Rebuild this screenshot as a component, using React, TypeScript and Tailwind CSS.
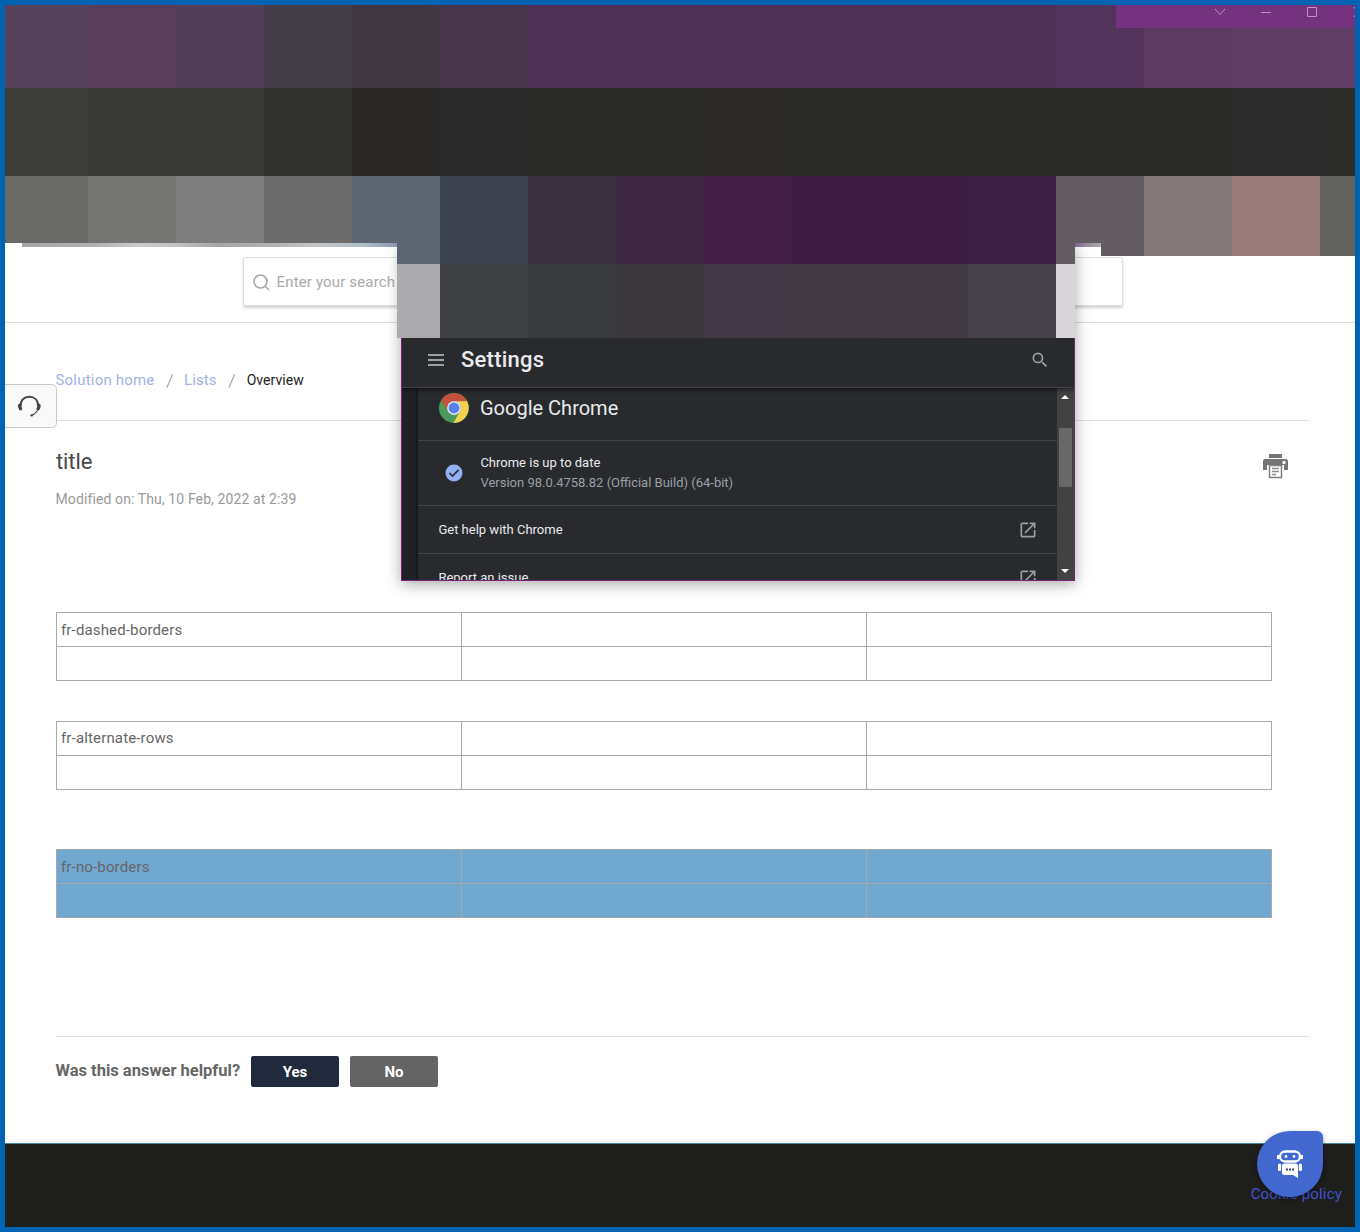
import React from "react";

const ROW_ONE = ["#54415a", "#593e5b", "#523d58", "#443e48", "#3f3742", "#49374d", "#513257", "#503157", "#503156", "#4f3156", "#4f3056", "#4f3056", "#53345c", "#5c3a61", "#5e3c63", "#603e66"];
const ROW_TWO = ["#3d3d3a", "#393a37", "#383837", "#31312f", "#2a2826", "#292929", "#292a27", "#292a27", "#2a2927", "#292a27", "#292a27", "#292a27", "#2a2a28", "#292a27", "#2b2b2b", "#2c2c2b"];
const ROW_THREE = ["#696967", "#757573", "#7e7e7e", "#6c6c6c", "#5c6672", "#3e4350", "#39323e", "#402845", "#421e45", "#3e1b42", "#3d1c42", "#3d1f43", "#635c62", "#847878", "#987b7a", "#62625f"];
const ROW_FOUR = ["#3f4042", "#3a3b3d", "#3a373d", "#403844", "#403843", "#413944", "#47414b"];

function MosaicRow({ colors, height }: { colors: string[]; height: string }) {
  return (
    <div className={`flex ${height}`}>
      {colors.map((color, i) => (
        <div key={i} className="w-[88px] shrink-0 first:w-[83px] last:w-[35px]" style={{ backgroundColor: color }} />
      ))}
    </div>
  );
}

function DataTable({ label, filled = false, leading = "leading-[35px]" }: { label: string; filled?: boolean; leading?: string }) {
  const line = filled ? "border-[#a8a8a8]" : "border-[#a9a9a9]";
  return (
    <div className={`grid h-[69px] w-[1216px] grid-cols-[405px_405px_405px] grid-rows-[34px_34px] border-l border-t text-[15px] text-[#666] ${line} ${filled ? "bg-[#70a8d0]" : ""}`}>
      {[0, 1, 2, 3, 4, 5].map((i) => (
        <div key={i} className={`border-b border-r pl-1 tracking-[0.15px] ${leading} ${line}`}>
          {i === 0 ? label : null}
        </div>
      ))}
    </div>
  );
}

function OpenIcon() {
  return (
    <svg width="20" height="20" viewBox="0 0 24 24" fill="#9aa0a6">
      <path d="M19 19H5V5h7V3H5a2 2 0 0 0-2 2v14a2 2 0 0 0 2 2h14c1.100 0 2-.9 2-2v-7h-2v7zM14 3v2h3.590l-9.830 9.830 1.410 1.410L19 6.410V10h2V3h-7z" />
    </svg>
  );
}

function ChromeLogo() {
  return (
    <svg width="30" height="30" viewBox="0 0 48 48">
      <circle cx="24" cy="24" r="24" fill="#4a9a5b" />
      <path d="M3.200 12A24 24 0 0 1 44.800 13H24a11 11 0 0 0-10.400 14.500Z" fill="#c5503b" />
      <path d="M44.800 13A24 24 0 0 1 23 48l10.500-18.500A11 11 0 0 0 24 13Z" fill="#f7d04e" />
      <circle cx="24" cy="24" r="11" fill="#e9edf5" />
      <circle cx="24" cy="24" r="8.700" fill="#5580ee" />
    </svg>
  );
}

function SettingsWindow() {
  return (
    <div className="absolute left-[392px] top-[238px] w-[678px]">
      <div className="flex h-[21px]">
        <div className="w-[43px] bg-[#5c6672]" />
        <div className="w-[88px] bg-[#3e4350]" />
        <div className="w-[88px] bg-[#39323e]" />
        <div className="w-[88px] bg-[#402845]" />
        <div className="w-[88px] bg-[#421e45]" />
        <div className="w-[88px] bg-[#3e1b42]" />
        <div className="w-[88px] bg-[#3d1c42]" />
        <div className="w-[88px] bg-[#3d1f43]" />
        <div className="w-[19px] bg-[#635c62]" />
      </div>
      <div className="flex h-[74px]">
        <div className="w-[43px] bg-[#acacae]" />
        {ROW_FOUR.map((c, i) => (
          <div key={i} className="w-[88px]" style={{ backgroundColor: c }} />
        ))}
        <div className="w-[19px] bg-[#d8d6d9]" />
      </div>
      <div className="ml-1 h-[243px] overflow-hidden border-x border-b border-[#7a237d] bg-[#202124] text-[#e8eaed]">
        <div className="relative flex h-[50px] items-center border-b border-[#414347] bg-[#292a2d] pb-[6px] pl-[26px] pr-[26px] shadow-[0_2px_4px_rgba(0,0,0,0.5)]">
          <svg width="16" height="12" viewBox="0 0 16 12" className="mt-px" fill="#9aa0a6">
            <path d="M0 0h16v2H0zM0 5h16v2H0zM0 10h16v2H0z" />
          </svg>
          <span className="ml-[17px] text-[22px] font-medium leading-none tracking-[0.25px]">Settings</span>
          <svg width="20" height="20" viewBox="0 0 24 24" className="ml-auto -mr-[2px]" fill="#9aa0a6">
            <path d="M15.500 14h-.79l-.28-.27A6.470 6.470 0 0 0 16 9.500 6.500 6.500 0 1 0 9.500 16c1.610 0 3.090-.59 4.230-1.570l.27.28v.79l5 4.990L20.490 19l-4.990-5zm-6 0a4.500 4.500 0 1 1 0-9 4.500 4.500 0 0 1 0 9z" />
          </svg>
        </div>
        <div className="flex h-[192px]">
          <div className="ml-4 w-[639px] overflow-hidden bg-[#292a2d] shadow-[-1px_0_2px_rgba(0,0,0,0.4)]">
            <div className="flex h-[53px] items-center border-b border-[#414347] pb-[12px] pl-[21px]">
              <ChromeLogo />
              <span className="ml-[11px] text-[20px] leading-none">Google Chrome</span>
            </div>
            <div className="flex h-[65px] items-center border-b border-[#414347] pl-[27px]">
              <svg width="18" height="18" viewBox="0 0 18 18">
                <circle cx="9" cy="9" r="8.500" fill="#93aff5" />
                <path d="m4.500 9 3 3L13.600 5.900" fill="none" stroke="#292a2d" strokeWidth="1.600" />
              </svg>
              <div className="ml-[17.400px] text-[13px] leading-5">
                <div>Chrome is up to date</div>
                <div className="text-[#9aa0a6]">Version 98.0.4758.82 (Official Build) (64-bit)</div>
              </div>
            </div>
            {["Get help with Chrome", "Report an issue"].map((text) => (
              <div key={text} className="flex h-12 items-center justify-between border-b border-[#414347] pl-[20.400px] pr-[19px] text-[13px]">
                <span>{text}</span>
                <OpenIcon />
              </div>
            ))}
          </div>
          <div className="flex w-[17px] flex-col items-center bg-[#424242]">
            <svg width="8" height="4" viewBox="0 0 8 4" className="mt-[7px] -ml-px shrink-0" fill="#fff"><path d="m0 4 4-4 4 4Z" /></svg>
            <div className="mt-[29px] h-[59px] w-[13px] shrink-0 bg-[#686868]" />
            <svg width="8" height="4" viewBox="0 0 8 4" className="mt-[82px] -ml-px shrink-0" fill="#fff"><path d="m0 0 4 4 4-4Z" /></svg>
          </div>
        </div>
      </div>
    </div>
  );
}

export default function App() {
  return (
    <div className="relative h-[1232px] w-[1360px] overflow-hidden border-[5px] border-[#0063b1] bg-white font-['Roboto',sans-serif]">
      <MosaicRow colors={ROW_ONE} height="h-[83px]" />
      <MosaicRow colors={ROW_TWO} height="h-[88px]" />
      <MosaicRow colors={ROW_THREE} height="h-[80px]" />

      <div className="absolute left-[1111px] top-0 h-[23px] w-[239px] bg-[#74327f]">
        <svg width="239" height="23" viewBox="0 0 239 23" fill="none" stroke="#c08fc8" strokeWidth="1">
          <path d="m99 4 5 5.500 5-5.500M145 7.500h10M191.500 2.500h9v9h-9zM237.500 2l5 5-5 5" />
        </svg>
      </div>

      <div className="absolute left-0 top-[238px] h-[13px] w-[392px] bg-white pl-[17px]">
        <div className="h-1 bg-[linear-gradient(90deg,#a5a5a5,#b2b2b2_20%,#cccccc_31%,#c4c4c4_40%,#a5a5a5_52%,#b0b0b0_65%,#c5c5c5_78%,#aebfca_91%,#8f93b4)]" />
      </div>
      <div className="absolute left-[1070px] top-[238px] h-[13px] w-[26px] bg-white">
        <div className="h-1 bg-[linear-gradient(90deg,#805e92,#938c96_40%,#a9a9a9)]" />
      </div>

      <header className="h-[67px] border-b border-[#dadbdc] px-[238px] pt-px">
        <div className="flex h-[49px] w-[880px] items-center rounded-[2px] border border-[#dedede] bg-white pl-[9px] text-[15px] text-[#aaa] shadow-[0_2px_3px_rgba(0,0,0,0.18)]">
          <svg width="17" height="17" viewBox="0 0 17 17" fill="none" stroke="#a5a5ab" strokeWidth="1.500" className="mt-px">
            <circle cx="7.500" cy="7.500" r="6.500" />
            <path d="m12 12 4 4" />
          </svg>
          <span className="ml-[6.500px] mt-[2px] tracking-[0.16px]">Enter your search term here...</span>
        </div>
      </header>

      <main className="pl-[51px]">
        <nav className="flex h-[98px] w-[1253px] items-center border-b border-[#dfdfdf] pt-[17px] text-[15px] text-[#a2b3e2]">
          <span className="-ml-[0.500px] tracking-[0.2px]">Solution home</span>
          <svg width="8" height="14" viewBox="0 0 8 14" className="ml-[11px] mt-px" stroke="#aaa" strokeWidth="1.300"><path d="M6.500 .5 1 13.500" /></svg>
          <span className="ml-[10.500px] tracking-[0.1px]">Lists</span>
          <svg width="8" height="14" viewBox="0 0 8 14" className="ml-[11px] mt-px" stroke="#aaa" strokeWidth="1.300"><path d="M6.500 .5 1 13.500" /></svg>
          <span className="ml-[11px] text-[14px] tracking-[0.04px] text-[#222]">Overview</span>
        </nav>
        <div className="flex h-[191px] w-[1253px] justify-between pr-[21px]">
          <div>
            <h1 className="mt-[27px] text-[22px] leading-[28px] tracking-[-0.1px] text-[#484848]">title</h1>
            <p className="-ml-[0.500px] mt-[13px] text-[14px] leading-5 tracking-[0.11px] text-[#999]">Modified on: Thu, 10 Feb, 2022 at 2:39</p>
          </div>
          <svg width="25" height="25" viewBox="0 0 25 25" className="mt-[33px]" fill="#747474">
            <path d="M6 0h13v4H6zM2 5h21a2 2 0 0 1 2 2v9h-4v-5H4v5H0V7a2 2 0 0 1 2-2Z" />
            <path d="M6.500 11.500h12v12h-12z" fill="#fff" stroke="#808080" strokeWidth="1.500" />
            <path d="M9 14.500h7M9 17.500h7M9 20.500h4" stroke="#8a8a8a" strokeWidth="1.500" />
            <circle cx="21" cy="8.500" r="1.700" fill="#fff" />
          </svg>
        </div>
        <DataTable label="fr-dashed-borders" />
        <div className="mt-[40px]"><DataTable label="fr-alternate-rows" leading="leading-[33px]" /></div>
        <div className="mt-[59px]"><DataTable label="fr-no-borders" filled /></div>
        <div className="mt-[118px] flex h-[107px] w-[1253px] items-start border-t border-[#dfdfdf] pt-[19px]">
          <span className="-ml-[0.500px] w-[195.500px] whitespace-nowrap text-[16.500px] font-bold leading-[29px] text-[#666]">Was this answer helpful?</span>
          <button className="h-[31px] w-[88px] rounded-[2px] bg-[#212a3c] pt-[2px] text-[15px] font-bold text-white">Yes</button>
          <button className="ml-[11px] h-[31px] w-[88px] rounded-[2px] bg-[#646464] pt-[2px] text-[15px] font-bold text-white">No</button>
        </div>
      </main>
      <footer className="flex h-[84px] justify-end border-t border-[#4c879a] bg-[#1e1e1c] pr-[13px] pt-[40px] text-[15px] leading-5 text-[#4053cf]">
        <span className="tracking-[0.18px]">Cookie policy</span>
      </footer>

      <div className="absolute -left-px top-[379px] flex h-[44px] w-[53px] items-center rounded-r-[5px] border border-[#c9c9c9] bg-[#f9f9f9] pl-[12px]">
        <svg width="25" height="22" viewBox="0 0 25 22" fill="none" stroke="#444" strokeLinecap="round">
          <path d="M3.500 11C3.500 5 7.300 1.800 12.300 1.800S21.100 5 21.100 11" strokeWidth="2" />
          <path d="M2.700 10.500q-.4 1.700.8 3.300" strokeWidth="3.400" />
          <path d="M21.900 10.500q.4 1.700-.8 3.300" strokeWidth="3.400" />
          <path d="M20.500 15.500Q18.500 18.500 15 20.300" strokeWidth="1.100" />
          <path d="M14.400 20.400h.5" strokeWidth="2.200" />
        </svg>
      </div>

      <div className="absolute left-[1252px] top-[1126px] flex h-[66px] w-[66px] items-center justify-center rounded-[33px_6px_33px_33px] bg-[#4268d0] shadow-[0_2px_5px_rgba(0,0,0,0.4)]">
        <svg width="26" height="28" viewBox="0 0 26 28" fill="#fff">
          <rect x="3" y="1.500" width="20" height="10" rx="5" fill="none" stroke="#fff" strokeWidth="2.300" />
          <path d="M0 5h2v4H0zM24 5h2v4h-2z" />
          <circle cx="9" cy="6.500" r="1.400" />
          <circle cx="17" cy="6.500" r="1.400" />
          <rect x="1" y="13.500" width="3.200" height="7.500" rx="1.500" />
          <rect x="21.800" y="13.500" width="3.200" height="7.500" rx="1.500" />
          <path d="M7.500 13.500h11a2.500 2.500 0 0 1 2.500 2.500v12l-5-3H7.500A2.500 2.500 0 0 1 5 22.500V16a2.500 2.500 0 0 1 2.500-2.500Z" />
          <path d="M9 18.500h2v2H9zM12 18.500h2v2h-2zM15 18.500h2v2h-2z" fill="#36466f" />
        </svg>
      </div>

      <div className="absolute left-[396px] top-[238px] h-[338px] w-[674px] shadow-[0_3px_14px_rgba(0,0,0,0.35)] [clip-path:inset(4px_-24px_-24px_-24px)]" />
      <SettingsWindow />
    </div>
  );
}
